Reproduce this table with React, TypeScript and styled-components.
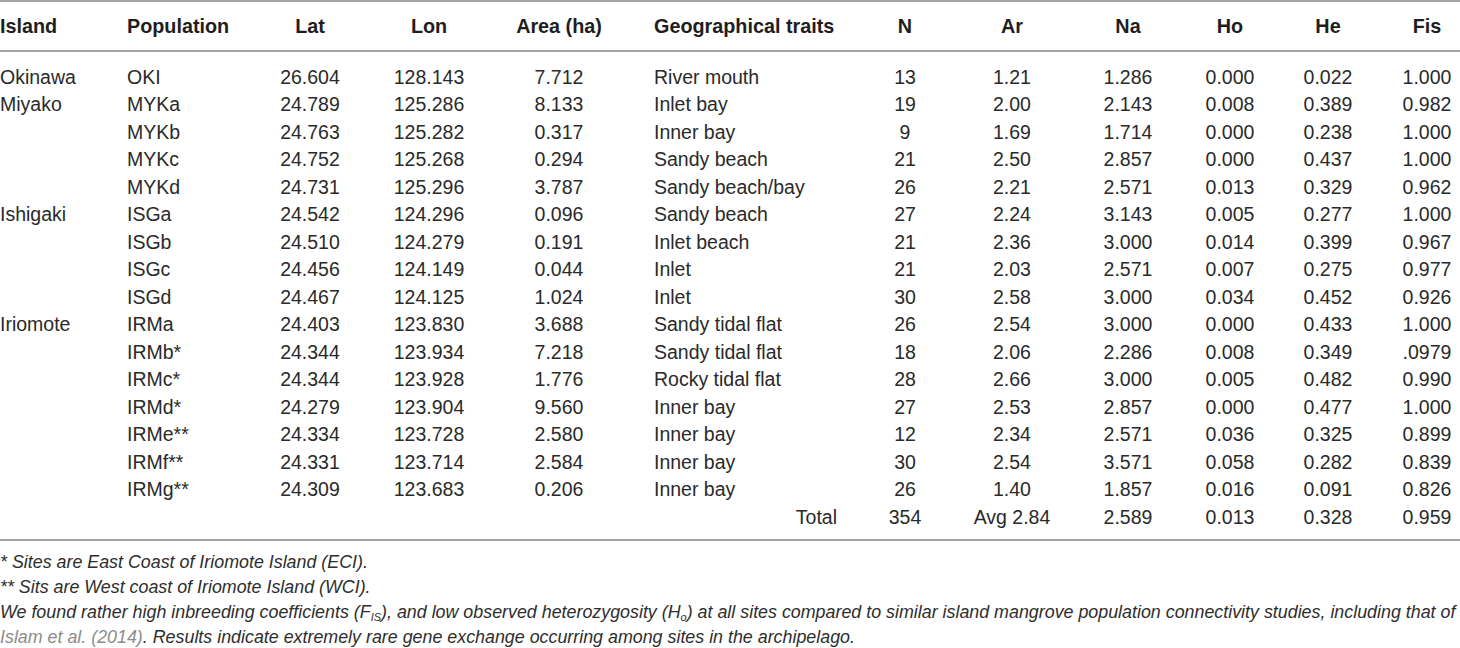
import React from "react";
import styled, { createGlobalStyle } from "styled-components";

const Global = createGlobalStyle`
  html, body { margin: 0; padding: 0; background: #ffffff; }
  body { font-family: "Liberation Sans", Arial, sans-serif; color: #2a2a2a; }
`;

type Align = "left" | "center" | "right";

const Page = styled.div`
  width: 1460px;
`;

const Table = styled.table`
  width: 1460px;
  border-collapse: collapse;
  table-layout: fixed;
  font-size: 19.5px;
`;

const HeadRow = styled.tr`
  border-top: 2px solid #a4a4a4;
  border-bottom: 2px solid #a4a4a4;
`;

const HeadCell = styled.th<{ $align: Align; $pl?: number }>`
  height: 48px;
  padding: 0 0 0 ${(p) => p.$pl ?? 0}px;
  text-align: ${(p) => p.$align};
  font-weight: bold;
  font-size: 19.8px;
  color: #1e1e1e;
  vertical-align: middle;
  white-space: nowrap;
`;

const BodyRow = styled.tr<{ $first?: boolean; $last?: boolean }>`
  & > td {
    padding-top: ${(p) => (p.$first ? 11.5 : 0)}px;
    padding-bottom: ${(p) => (p.$last ? 8 : 0)}px;
  }
  ${(p) => (p.$last ? "border-bottom: 2px solid #a4a4a4;" : "")}
`;

const Cell = styled.td<{ $align: Align; $pl?: number; $pr?: number }>`
  line-height: 27.5px;
  padding-left: ${(p) => p.$pl ?? 0}px;
  padding-right: ${(p) => p.$pr ?? 0}px;
  text-align: ${(p) => p.$align};
  white-space: nowrap;
  color: #2a2a2a;
`;

const Notes = styled.div`
  padding-top: 8.5px;
  font-style: italic;
  font-size: 17.85px;
  line-height: 25.3px;
  color: #2e2e2e;
`;

const Note = styled.div`
  white-space: nowrap;
`;

const Sub = styled.sub`
  font-size: 11px;
  vertical-align: -3px;
  line-height: 0;
`;

const Ref = styled.span`
  color: #8c8c8c;
`;

type Col = { key: string; label: string; width: number; align: Align; pl?: number };

const cols: Col[] = [
  { key: "island", label: "Island", width: 127, align: "left" },
  { key: "pop", label: "Population", width: 123, align: "left" },
  { key: "lat", label: "Lat", width: 120, align: "center" },
  { key: "lon", label: "Lon", width: 118, align: "center" },
  { key: "area", label: "Area (ha)", width: 142, align: "center" },
  { key: "geo", label: "Geographical traits", width: 230, align: "left", pl: 24 },
  { key: "n", label: "N", width: 90, align: "center" },
  { key: "ar", label: "Ar", width: 124, align: "center" },
  { key: "na", label: "Na", width: 108, align: "center" },
  { key: "ho", label: "Ho", width: 96, align: "center" },
  { key: "he", label: "He", width: 100, align: "center" },
  { key: "fis", label: "Fis", width: 82, align: "center", pl: 16 },
];

const rows: string[][] = [
  ["Okinawa", "OKI", "26.604", "128.143", "7.712", "River mouth", "13", "1.21", "1.286", "0.000", "0.022", "1.000"],
  ["Miyako", "MYKa", "24.789", "125.286", "8.133", "Inlet bay", "19", "2.00", "2.143", "0.008", "0.389", "0.982"],
  ["", "MYKb", "24.763", "125.282", "0.317", "Inner bay", "9", "1.69", "1.714", "0.000", "0.238", "1.000"],
  ["", "MYKc", "24.752", "125.268", "0.294", "Sandy beach", "21", "2.50", "2.857", "0.000", "0.437", "1.000"],
  ["", "MYKd", "24.731", "125.296", "3.787", "Sandy beach/bay", "26", "2.21", "2.571", "0.013", "0.329", "0.962"],
  ["Ishigaki", "ISGa", "24.542", "124.296", "0.096", "Sandy beach", "27", "2.24", "3.143", "0.005", "0.277", "1.000"],
  ["", "ISGb", "24.510", "124.279", "0.191", "Inlet beach", "21", "2.36", "3.000", "0.014", "0.399", "0.967"],
  ["", "ISGc", "24.456", "124.149", "0.044", "Inlet", "21", "2.03", "2.571", "0.007", "0.275", "0.977"],
  ["", "ISGd", "24.467", "124.125", "1.024", "Inlet", "30", "2.58", "3.000", "0.034", "0.452", "0.926"],
  ["Iriomote", "IRMa", "24.403", "123.830", "3.688", "Sandy tidal flat", "26", "2.54", "3.000", "0.000", "0.433", "1.000"],
  ["", "IRMb*", "24.344", "123.934", "7.218", "Sandy tidal flat", "18", "2.06", "2.286", "0.008", "0.349", ".0979"],
  ["", "IRMc*", "24.344", "123.928", "1.776", "Rocky tidal flat", "28", "2.66", "3.000", "0.005", "0.482", "0.990"],
  ["", "IRMd*", "24.279", "123.904", "9.560", "Inner bay", "27", "2.53", "2.857", "0.000", "0.477", "1.000"],
  ["", "IRMe**", "24.334", "123.728", "2.580", "Inner bay", "12", "2.34", "2.571", "0.036", "0.325", "0.899"],
  ["", "IRMf**", "24.331", "123.714", "2.584", "Inner bay", "30", "2.54", "3.571", "0.058", "0.282", "0.839"],
  ["", "IRMg**", "24.309", "123.683", "0.206", "Inner bay", "26", "1.40", "1.857", "0.016", "0.091", "0.826"],
];

const totalRow = ["", "", "", "", "", "Total", "354", "Avg 2.84", "2.589", "0.013", "0.328", "0.959"];

export default function App() {
  return (
    <Page>
      <Global />
      <Table>
        <colgroup>
          {cols.map((c) => (
            <col key={c.key} style={{ width: c.width }} />
          ))}
        </colgroup>
        <thead>
          <HeadRow>
            {cols.map((c) => (
              <HeadCell key={c.key} $align={c.align} $pl={c.pl}>
                {c.label}
              </HeadCell>
            ))}
          </HeadRow>
        </thead>
        <tbody>
          {rows.map((r, i) => (
            <BodyRow key={i} $first={i === 0}>
              {r.map((v, j) => (
                <Cell key={j} $align={cols[j].align} $pl={cols[j].pl}>
                  {v}
                </Cell>
              ))}
            </BodyRow>
          ))}
          <BodyRow $last>
            {totalRow.map((v, j) =>
              j === 5 ? (
                <Cell key={j} $align="right" $pr={23}>
                  {v}
                </Cell>
              ) : (
                <Cell key={j} $align={cols[j].align} $pl={cols[j].pl}>
                  {v}
                </Cell>
              )
            )}
          </BodyRow>
        </tbody>
      </Table>
      <Notes>
        <Note>* Sites are East Coast of Iriomote Island (ECI).</Note>
        <Note>** Sits are West coast of Iriomote Island (WCI).</Note>
        <Note>
          We found rather high inbreeding coefficients (F<Sub>IS</Sub>), and low observed heterozygosity (H
          <Sub>o</Sub>) at all sites compared to similar island mangrove population connectivity studies, including that of
        </Note>
        <Note>
          <Ref>Islam et al. (2014)</Ref>. Results indicate extremely rare gene exchange occurring among sites in the archipelago.
        </Note>
      </Notes>
    </Page>
  );
}
